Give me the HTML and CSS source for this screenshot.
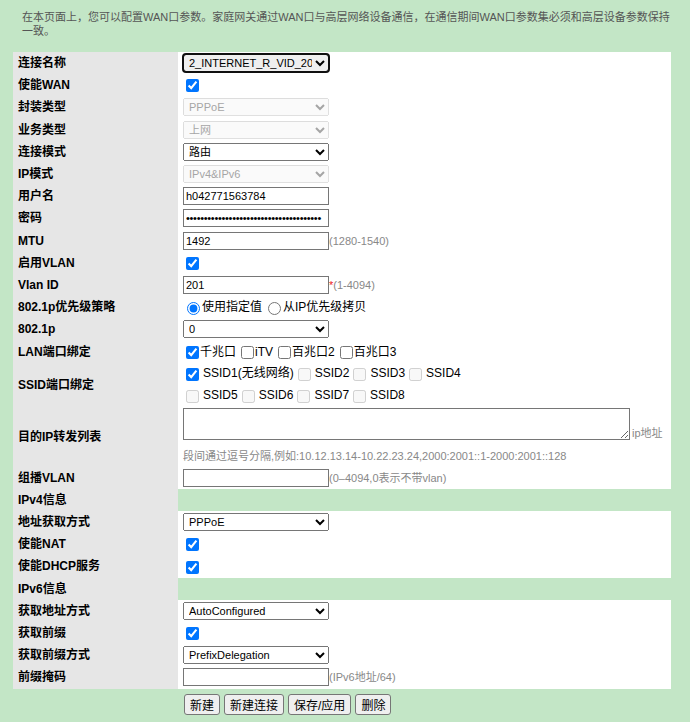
FILE: index.html
```html
<!DOCTYPE html>
<html lang="zh-CN">
<head>
<meta charset="utf-8">
<title>WAN配置</title>
<link rel="stylesheet" href="styles.css">
</head>
<body>
<p class="intro">在本页面上，您可以配置WAN口参数。家庭网关通过WAN口与高层网络设备通信，在通信期间WAN口参数集必须和高层设备参数保持一致。</p>

<table class="cfg">
  <colgroup><col class="c-lbl"><col class="c-val"></colgroup>
  <tr><td class="lbl">连接名称</td><td class="val"><select class="sel sel-active"><option>2_INTERNET_R_VID_201</option></select></td></tr>
  <tr><td class="lbl">使能WAN</td><td class="val"><input type="checkbox" class="chk" checked></td></tr>
  <tr><td class="lbl">封装类型</td><td class="val"><select class="sel" disabled><option>PPPoE</option></select></td></tr>
  <tr><td class="lbl">业务类型</td><td class="val"><select class="sel" disabled><option>上网</option></select></td></tr>
  <tr><td class="lbl">连接模式</td><td class="val"><select class="sel"><option>路由</option></select></td></tr>
  <tr><td class="lbl">IP模式</td><td class="val"><select class="sel" disabled><option>IPv4&amp;IPv6</option></select></td></tr>
  <tr><td class="lbl">用户名</td><td class="val"><input type="text" class="txt" value="h042771563784"></td></tr>
  <tr><td class="lbl">密码</td><td class="val"><input type="password" class="txt pwd" value="abcdefghijklmnopqrstuvwxyzabcdefghijkl"></td></tr>
  <tr><td class="lbl">MTU</td><td class="val"><input type="text" class="txt" value="1492"><span class="hint">(1280-1540)</span></td></tr>
  <tr><td class="lbl">启用VLAN</td><td class="val"><input type="checkbox" class="chk" checked></td></tr>
  <tr><td class="lbl">Vlan ID</td><td class="val"><input type="text" class="txt" value="201"><span class="req">*</span><span class="hint">(1-4094)</span></td></tr>
  <tr><td class="lbl">802.1p优先级策略</td><td class="val"><label class="opt"><input type="radio" name="prio" class="rad" checked>使用指定值</label><label class="opt"><input type="radio" name="prio" class="rad">从IP优先级拷贝</label></td></tr>
  <tr><td class="lbl">802.1p</td><td class="val"><select class="sel"><option>0</option></select></td></tr>
  <tr><td class="lbl">LAN端口绑定</td><td class="val"><label class="opt"><input type="checkbox" class="chk" checked>千兆口</label><label class="opt"><input type="checkbox" class="chk">iTV</label><label class="opt"><input type="checkbox" class="chk">百兆口2</label><label class="opt"><input type="checkbox" class="chk">百兆口3</label></td></tr>
  <tr class="row-ssid"><td class="lbl">SSID端口绑定</td><td class="val">
    <div class="line"><label class="opt ssid"><input type="checkbox" class="chk" checked>SSID1(无线网络)</label><label class="opt ssid"><input type="checkbox" class="chk" disabled>SSID2</label><label class="opt ssid"><input type="checkbox" class="chk" disabled>SSID3</label><label class="opt ssid"><input type="checkbox" class="chk" disabled>SSID4</label></div>
    <div class="line"><label class="opt ssid"><input type="checkbox" class="chk" disabled>SSID5</label><label class="opt ssid"><input type="checkbox" class="chk" disabled>SSID6</label><label class="opt ssid"><input type="checkbox" class="chk" disabled>SSID7</label><label class="opt ssid"><input type="checkbox" class="chk" disabled>SSID8</label></div>
  </td></tr>
  <tr class="row-ip"><td class="lbl">目的IP转发列表</td><td class="val val-top">
    <div class="ip-box"><textarea class="area"></textarea><span class="hint">ip地址</span></div>
    <div class="note">段间通过逗号分隔,例如:10.12.13.14-10.22.23.24,2000:2001::1-2000:2001::128</div>
  </td></tr>
  <tr><td class="lbl">组播VLAN</td><td class="val"><input type="text" class="txt"><span class="hint">(0–4094,0表示不带vlan)</span></td></tr>
  <tr class="sect"><td class="lbl">IPv4信息</td><td class="val"></td></tr>
  <tr><td class="lbl">地址获取方式</td><td class="val"><select class="sel"><option>PPPoE</option></select></td></tr>
  <tr><td class="lbl">使能NAT</td><td class="val"><input type="checkbox" class="chk" checked></td></tr>
  <tr><td class="lbl">使能DHCP服务</td><td class="val"><input type="checkbox" class="chk" checked></td></tr>
  <tr class="sect"><td class="lbl">IPv6信息</td><td class="val"></td></tr>
  <tr><td class="lbl">获取地址方式</td><td class="val"><select class="sel"><option>AutoConfigured</option></select></td></tr>
  <tr><td class="lbl">获取前缀</td><td class="val"><input type="checkbox" class="chk" checked></td></tr>
  <tr><td class="lbl">获取前缀方式</td><td class="val"><select class="sel"><option>PrefixDelegation</option></select></td></tr>
  <tr><td class="lbl">前缀掩码</td><td class="val"><input type="text" class="txt"><span class="hint">(IPv6地址/64)</span></td></tr>
</table>

<div class="actions">
  <button type="button" class="btn">新建</button>
  <button type="button" class="btn">新建连接</button>
  <button type="button" class="btn">保存/应用</button>
  <button type="button" class="btn">删除</button>
</div>
</body>
</html>
```

FILE: styles.css
```css
html, body {
  margin: 0;
  background: #c3e6c6;
}

body {
  font-family: "Liberation Sans", Arial, "Noto Sans CJK SC", sans-serif;
  font-size: 12px;
  color: #000;
}

.intro {
  margin: 0 0 14px;
  padding: 10px 13px 0 22px;
  font-size: 11px;
  line-height: 14px;
  color: #555;
}

/* settings table */
.cfg {
  margin-left: 13px;
  width: 658px;
  border-collapse: collapse;
  table-layout: fixed;
  background: #fff;
}

.c-lbl { width: 165px; }
.c-val { width: 493px; }

.cfg td {
  height: 22.2px;
  padding: 0;
  vertical-align: middle;
  line-height: 14px;
}

.cfg .lbl {
  background: #e6e6e6;
  padding-left: 5px;
  font-weight: bold;
  font-size: 12px;
}

.cfg .val {
  padding-left: 5px;
  white-space: nowrap;
}

.cfg .sect .val { background: #c3e6c6; }

.row-ssid td { height: 43px; }
.row-ip td { height: 60px; }
.cfg .val-top { vertical-align: top; }

/* controls */
.sel {
  width: 146px;
  height: 18px;
  margin: 0;
  padding: 0 0 0 1px;
  font: 11px "Liberation Sans", Arial, "Noto Sans CJK SC", sans-serif;
  vertical-align: middle;
}

.sel-active {
  outline: 2px solid #101010;
  outline-offset: -1px;
  border-radius: 3px;
}

.txt {
  box-sizing: border-box;
  width: 146px;
  height: 18px;
  margin: 0;
  padding: 0 2px;
  border: 1px solid #767676;
  font: 11px "Liberation Sans", Arial, "Noto Sans CJK SC", sans-serif;
  vertical-align: middle;
}

.pwd { font-size: 11px; letter-spacing: -0.3px; }

.chk {
  width: 13px;
  height: 13px;
  margin: 0 1px 0 3px;
  vertical-align: middle;
}

.rad {
  width: 13px;
  height: 13px;
  margin: 0 2px 0 4px;
  vertical-align: middle;
}

.opt {
  display: inline-block;
  vertical-align: middle;
  margin-right: 2px;
}

.ssid .chk { margin-right: 4px; }
.ssid { margin-right: 1px; }

.line {
  height: 22px;
  display: flex;
  align-items: center;
}

.hint {
  color: #888;
  font-size: 11px;
  vertical-align: middle;
}

.req {
  color: #e22;
  font-size: 11px;
  vertical-align: middle;
}

.ip-box {
  margin-top: 1px;
  height: 32px;
  display: flex;
  align-items: flex-end;
}

.area {
  box-sizing: border-box;
  width: 447px;
  height: 32px;
  margin: 0 2px 0 0;
  border: 1px solid #767676;
  font: 11px "Liberation Sans", Arial, sans-serif;
}

.note {
  margin-top: 9px;
  color: #888;
  font-size: 11px;
  line-height: 14px;
}

/* bottom buttons */
.actions {
  display: flex;
  gap: 4px;
  padding: 5px 0 0 184px;
}

.btn {
  height: 21px;
  margin: 0;
  padding: 0 5px;
  border: 1px solid #767676;
  border-radius: 3px;
  background: #efefef;
  font: 12px "Liberation Sans", Arial, "Noto Sans CJK SC", sans-serif;
  color: #000;
}
```
